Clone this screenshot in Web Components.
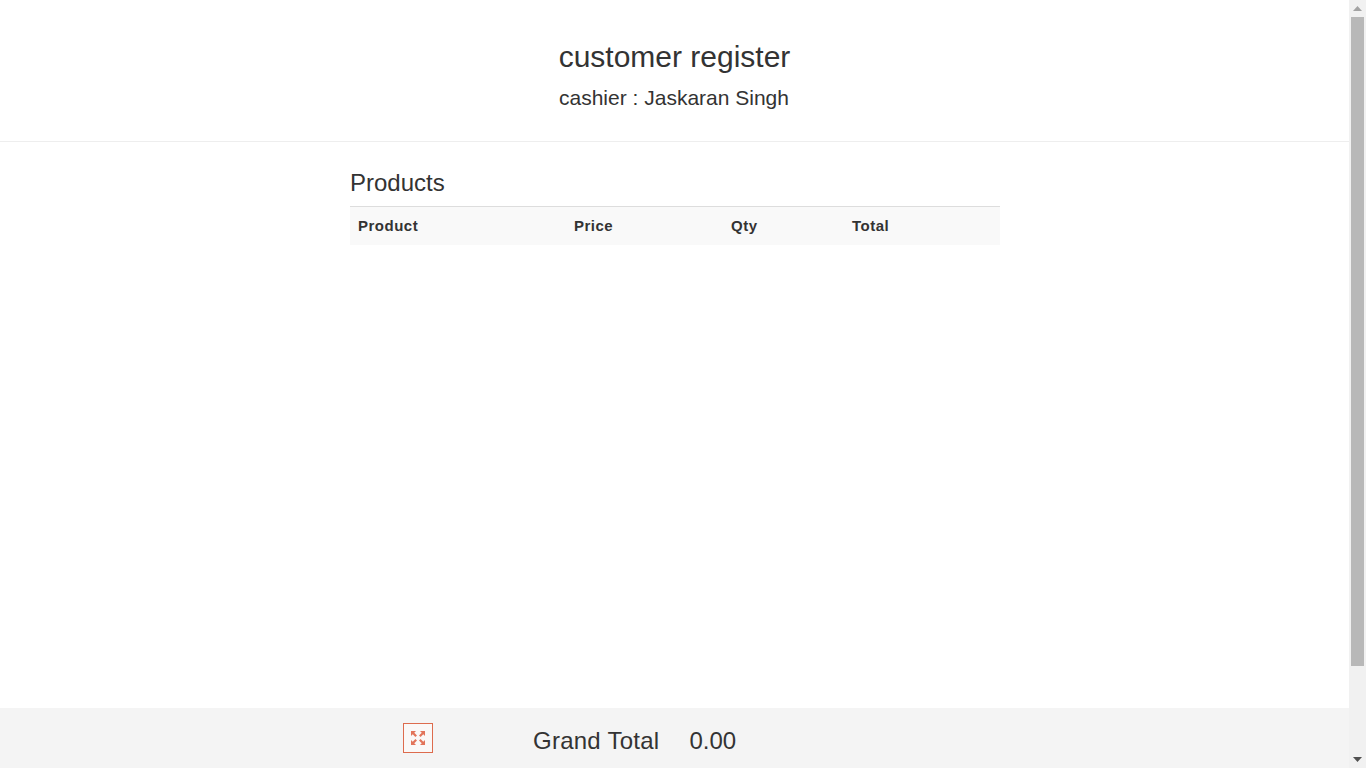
<!DOCTYPE html>
<html lang="en">
<head>
<meta charset="utf-8">
<title>customer register</title>
<style>
    html, body { margin: 0; height: 100%; overflow: hidden; }
    body { font-family: "Liberation Sans", Arial, sans-serif; color: #333; background: #fff; }
</style>
</head>
<body>
<register-app>
    <register-header slot="header" title="customer register" cashier="cashier : Jaskaran Singh"></register-header>
    <products-table slot="content" columns="Product,Price,Qty,Total"></products-table>
    <grand-total slot="footer" amount="0.00"></grand-total>
</register-app>

<script>
class RegisterApp extends HTMLElement {
    constructor() {
        super();
        this.attachShadow({ mode: "open" });
        this.shadowRoot.innerHTML = `
            <style>
                :host { display: flex; height: 100vh; }
                .page { flex: 1; min-width: 0; display: flex; flex-direction: column; }
                .content { flex: 1; min-height: 0; }
            </style>
            <div class="page">
                <slot name="header"></slot>
                <div class="content"><slot name="content"></slot></div>
                <slot name="footer"></slot>
            </div>
            <page-scrollbar></page-scrollbar>
        `;
    }
}

class RegisterHeader extends HTMLElement {
    constructor() {
        super();
        this.attachShadow({ mode: "open" });
    }

    connectedCallback() {
        this.shadowRoot.innerHTML = `
            <style>
                :host { display: block; border-bottom: 1px solid #eee; text-align: center; color: #333; }
                h2 { margin: 0; padding-top: 40px; font-size: 30px; font-weight: 400; line-height: 33px; }
                h4 { margin: 0; padding: 13px 1px 32px 0; font-size: 21px; font-weight: 400; line-height: 23px; }
            </style>
            <h2>${this.getAttribute("title")}</h2>
            <h4>${this.getAttribute("cashier")}</h4>
        `;
    }
}

class ProductsTable extends HTMLElement {
    constructor() {
        super();
        this.attachShadow({ mode: "open" });
    }

    connectedCallback() {
        const columns = this.getAttribute("columns").split(",");
        this.shadowRoot.innerHTML = `
            <style>
                :host { display: block; width: 650px; margin-left: 350px; padding-top: 28px; color: #333; }
                h3 { margin: 0 0 10px; font-size: 24px; font-weight: 400; line-height: 26px; }
                .head {
                    display: grid;
                    grid-template-columns: 216px 157px 121px 1fr;
                    border-top: 1px solid #ddd;
                    background: #f9f9f9;
                    font-size: 15px;
                    font-weight: 700;
                    letter-spacing: 0.5px;
                }
                .head span { padding: 8px; line-height: 22px; }
            </style>
            <h3>Products</h3>
            <div class="head">${columns.map(c => `<span>${c}</span>`).join("")}</div>
        `;
    }
}

class GrandTotal extends HTMLElement {
    constructor() {
        super();
        this.attachShadow({ mode: "open" });
    }

    connectedCallback() {
        this.shadowRoot.innerHTML = `
            <style>
                :host { display: block; height: 60px; overflow: hidden; background: #f4f4f4; color: #333; }
                .row { display: flex; align-items: flex-start; width: 650px; margin-left: 350px; padding-top: 15px; }
                .toggle {
                    box-sizing: border-box;
                    display: flex;
                    align-items: center;
                    justify-content: center;
                    width: 30px;
                    height: 30px;
                    margin-left: 53px;
                    border: 1px solid #dd6b4d;
                    background: #faf8f7;
                }
                .label { margin-left: 100px; font-size: 24px; line-height: 36px; letter-spacing: 0.25px; }
                .amount { margin-left: 30px; font-size: 24px; line-height: 36px; }
            </style>
            <div class="row">
                <div class="toggle">
                    <svg width="14" height="14" viewBox="0 0 14 14" fill="#e2745a" stroke="none">
                        <path d="M0 0h5L0 5z"/>
                        <path d="M14 0H9L14 5z"/>
                        <path d="M0 14h5L0 9z"/>
                        <path d="M14 14H9L14 9z"/>
                        <path d="M2 2l3.2 3.2M12 2 8.8 5.2M2 12l3.2-3.2M12 12 8.8 8.8" stroke="#e2745a" stroke-width="2.2" fill="none"/>
                    </svg>
                </div>
                <span class="label">Grand Total</span>
                <span class="amount">${this.getAttribute("amount")}</span>
            </div>
        `;
    }
}

class PageScrollbar extends HTMLElement {
    constructor() {
        super();
        this.attachShadow({ mode: "open" });
        this.shadowRoot.innerHTML = `
            <style>
                :host { display: flex; flex-direction: column; flex: none; width: 17px; height: 100%; background: #f1f1f1; }
                .arrow { flex: none; height: 17px; display: flex; align-items: center; justify-content: center; }
                .thumb { flex: none; height: 649px; margin: 0 2px; background: #b8b8b8; }
                .rest { flex: 1; }
            </style>
            <div class="arrow"><svg width="9" height="5" viewBox="0 0 9 5"><path d="M4.5 0 9 5H0z" fill="#a3a3a3"/></svg></div>
            <div class="thumb"></div>
            <div class="rest"></div>
            <div class="arrow"><svg width="9" height="5" viewBox="0 0 9 5"><path d="M0 0h9L4.5 5z" fill="#505050"/></svg></div>
        `;
    }
}

customElements.define("page-scrollbar", PageScrollbar);
customElements.define("register-app", RegisterApp);
customElements.define("register-header", RegisterHeader);
customElements.define("products-table", ProductsTable);
customElements.define("grand-total", GrandTotal);
</script>
</body>
</html>
